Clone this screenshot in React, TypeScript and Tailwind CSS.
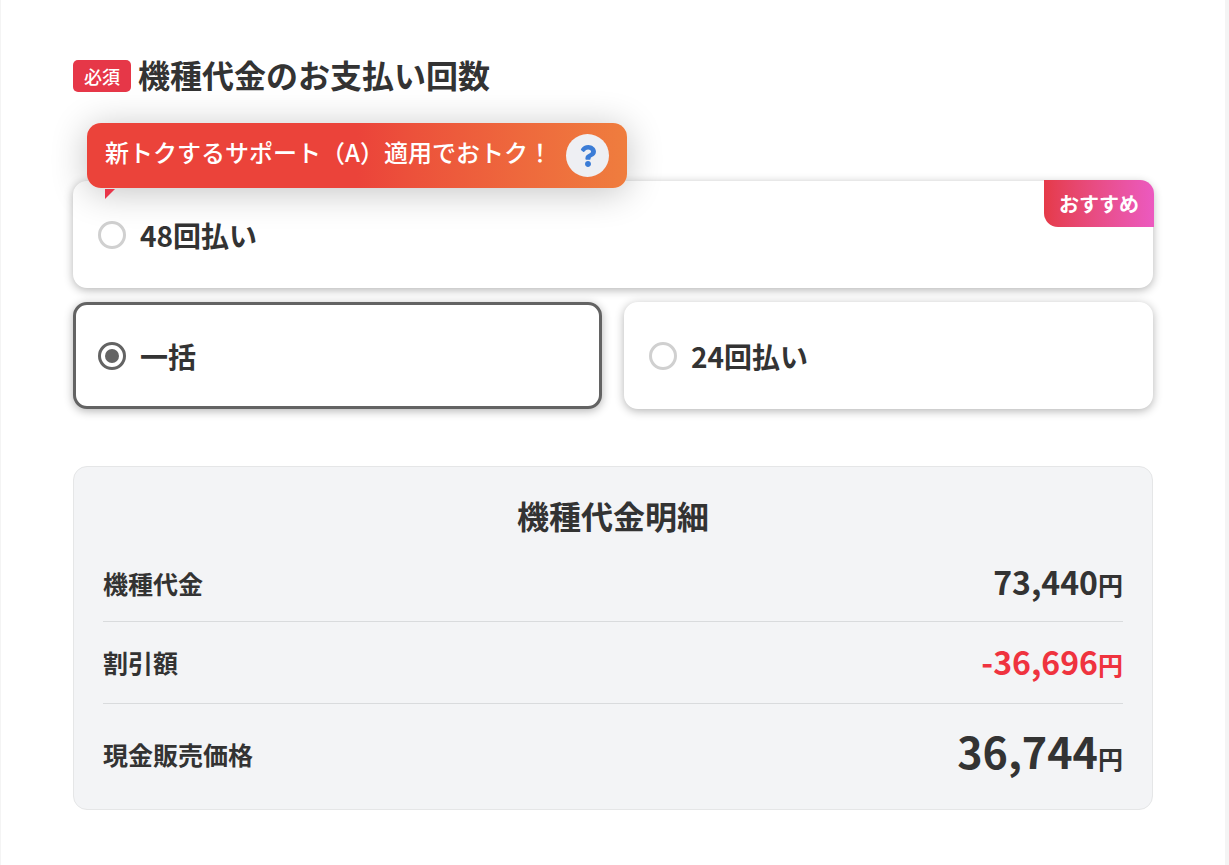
import { useState } from 'react'
import { FaQuestion } from 'react-icons/fa'

type PaymentOptionProps = {
  id: string
  label: string
  selected: string
  onSelect: (id: string) => void
}

const rows = [
  { label: '機種代金', price: '73,440', row: 'h-[76px] border-b border-[#d9dbdd]', color: 'text-[#333]', size: 'text-[32px]' },
  { label: '割引額', price: '-36,696', row: 'h-[82px] border-b border-[#d9dbdd]', color: 'text-[#ef333f]', size: 'text-[32px]' },
  { label: '現金販売価格', price: '36,744', row: 'h-[102px]', color: 'text-[#333]', size: 'text-[43px]' },
]

function PaymentOption({ id, label, selected, onSelect }: PaymentOptionProps) {
  const checked = selected === id

  return (
    <label
      htmlFor={id}
      className={`flex items-center h-[107px] gap-3.5 pl-[22px] bg-white rounded-[14px] border-[3px] cursor-pointer shadow-[0_2px_10px_rgba(0,0,0,0.3)] ${
        checked ? 'border-[#636363]' : 'border-white'
      }`}
    >
      <input
        type="radio"
        id={id}
        name="payment"
        checked={checked}
        onChange={() => onSelect(id)}
        className="appearance-none shrink-0 size-7 rounded-full border-[3px] border-[#d0d0d0] bg-white grid place-items-center checked:border-[#636363] checked:before:size-3.5 checked:before:rounded-full checked:before:bg-[#636363] checked:before:content-['']"
      />
      <span className="text-[28px] leading-10 font-bold">{label}</span>
    </label>
  )
}

function App() {
  const [selected, setSelected] = useState('once')

  return (
    <div className="min-h-screen bg-white border-l border-r-4 border-l-[#f4f4f4] border-r-[#f4f4f4] px-[72px] pt-[52px] pb-[55px] text-[#333] font-['Noto_Sans_CJK_JP',sans-serif]">
      <div className="flex items-center gap-[7px]">
        <span className="h-8 px-[11px] rounded-[5px] bg-[#e63748] text-white text-[18px] leading-8 font-medium">必須</span>
        <h1 className="pb-1 text-[32px] leading-11 font-bold">機種代金のお支払い回数</h1>
      </div>

      <div className="mt-[81px] grid grid-cols-2 gap-x-[22px] gap-y-3.5">
        <div className="relative col-span-2">
          <PaymentOption id="pay48" label="48回払い" selected={selected} onSelect={setSelected} />

          <div className="absolute -top-[58px] left-3.5 w-[540px] h-[65px] rounded-[14px] px-[18px] flex items-center justify-between bg-linear-to-r from-[#eb433a] from-50% to-[#ef7d3e] shadow-[0_4px_36px_rgba(0,0,0,0.24)] text-white">
            <span className="pb-2 text-[24px] leading-9 font-medium whitespace-nowrap">新トクするサポート（A）適用でおトク！</span>
            <button type="button" aria-label="ヘルプ" className="size-[43px] shrink-0 rounded-full bg-[#eeeff3] text-[#3b7cd6] flex items-center justify-center">
              <FaQuestion className="size-[22px]" />
            </button>
            <svg className="absolute top-[66px] left-[18px] w-2.5 h-2.5" viewBox="0 0 10 10" aria-hidden="true">
              <path d="M0 0h10L0 10z" fill="#e93549" />
            </svg>
          </div>

          <span className="absolute -top-px -right-px px-[15px] rounded-tr-[14px] rounded-bl-[14px] bg-linear-to-r from-[#e53a48] to-[#ec59c0] text-white text-[20px] leading-[47px] font-bold">
            おすすめ
          </span>
        </div>

        <PaymentOption id="once" label="一括" selected={selected} onSelect={setSelected} />
        <PaymentOption id="pay24" label="24回払い" selected={selected} onSelect={setSelected} />
      </div>

      <section className="mt-[57px] px-[29px] pt-6 pb-1 rounded-[14px] border border-[#e5e6e7] bg-[#f3f4f6]">
        <h2 className="mb-1.5 text-center text-[32px] leading-[48px] font-bold">機種代金明細</h2>
        <table className="w-full font-bold">
          <tbody>
            {rows.map((item) => (
              <tr key={item.label} className={item.row}>
                <th scope="row" className="text-left text-[25px] leading-9">{item.label}</th>
                <td className={`text-right text-[25px] leading-9 ${item.color}`}>
                  <span className={item.size}>{item.price}</span>円
                </td>
              </tr>
            ))}
          </tbody>
        </table>
      </section>
    </div>
  )
}

export default App
